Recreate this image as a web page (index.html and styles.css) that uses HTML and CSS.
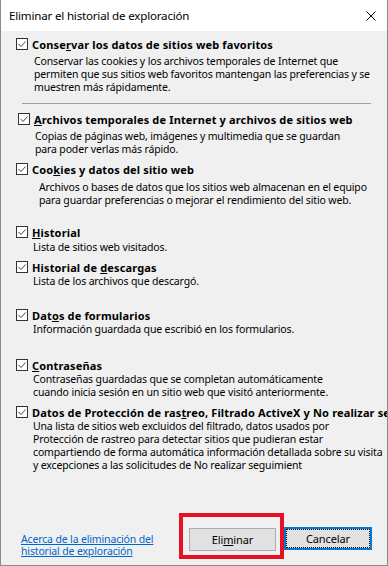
FILE: index.html
```html
<!DOCTYPE html>
<html lang="es">
<head>
<meta charset="utf-8">
<title>Eliminar el historial de exploración</title>
<link rel="stylesheet" href="styles.css">
</head>
<body>
<div class="window">
  <div class="titlebar">
    <span class="title">Eliminar el historial de exploración</span>
    <svg class="close" width="10" height="10" viewBox="0 0 10 10"><path d="M0.5 0.5 L9.5 9.5 M9.5 0.5 L0.5 9.5" stroke="#000" stroke-width="1" fill="none"/></svg>
  </div>
  <div class="content">
    <div class="option o1">
      <div class="label"><svg class="cb" viewBox="0 0 12 12"><rect x="0.5" y="0.5" width="11" height="11" fill="#fff" stroke="#333"/><path d="M2.5 6 L5 8.5 L9.5 3.5" stroke="#444" fill="none"/></svg><span>Conse<u>r</u>var los datos de sitios web favoritos</span></div>
      <p class="desc">Conservar las cookies y los archivos temporales de Internet que<br>permiten que sus sitios web favoritos mantengan las preferencias y se<br>muestren más rápidamente.</p>
    </div>
    <div class="sep"></div>
    <div class="option o2">
      <div class="label"><svg class="cb" viewBox="0 0 12 12"><rect x="0.5" y="0.5" width="11" height="11" fill="#fff" stroke="#333"/><path d="M2.5 6 L5 8.5 L9.5 3.5" stroke="#444" fill="none"/></svg><span><u>A</u>rchivos temporales de Internet y archivos de sitios web</span></div>
      <p class="desc">Copias de páginas web, imágenes y multimedia que se guardan<br>para poder verlas más rápido.</p>
    </div>
    <div class="option o3">
      <div class="label"><svg class="cb" viewBox="0 0 12 12"><rect x="0.5" y="0.5" width="11" height="11" fill="#fff" stroke="#333"/><path d="M2.5 6 L5 8.5 L9.5 3.5" stroke="#444" fill="none"/></svg><span>Coo<u>k</u>ies y datos del sitio web</span></div>
      <p class="desc">Archivos o bases de datos que los sitios web almacenan en el equipo<br>para guardar preferencias o mejorar el rendimiento del sitio web.</p>
    </div>
    <div class="option o4">
      <div class="label"><svg class="cb" viewBox="0 0 12 12"><rect x="0.5" y="0.5" width="11" height="11" fill="#fff" stroke="#333"/><path d="M2.5 6 L5 8.5 L9.5 3.5" stroke="#444" fill="none"/></svg><span><u>H</u>istorial</span></div>
      <p class="desc">Lista de sitios web visitados.</p>
    </div>
    <div class="option o5">
      <div class="label"><svg class="cb" viewBox="0 0 12 12"><rect x="0.5" y="0.5" width="11" height="11" fill="#fff" stroke="#333"/><path d="M2.5 6 L5 8.5 L9.5 3.5" stroke="#444" fill="none"/></svg><span>Historial de <u>d</u>escargas</span></div>
      <p class="desc">Lista de los archivos que descargó.</p>
    </div>
    <div class="option o6">
      <div class="label"><svg class="cb" viewBox="0 0 12 12"><rect x="0.5" y="0.5" width="11" height="11" fill="#fff" stroke="#333"/><path d="M2.5 6 L5 8.5 L9.5 3.5" stroke="#444" fill="none"/></svg><span>Dat<u>o</u>s de formularios</span></div>
      <p class="desc">Información guardada que escribió en los formularios.</p>
    </div>
    <div class="option o7">
      <div class="label"><svg class="cb" viewBox="0 0 12 12"><rect x="0.5" y="0.5" width="11" height="11" fill="#fff" stroke="#333"/><path d="M2.5 6 L5 8.5 L9.5 3.5" stroke="#444" fill="none"/></svg><span><u>C</u>ontraseñas</span></div>
      <p class="desc">Contraseñas guardadas que se completan automáticamente<br>cuando inicia sesión en un sitio web que visitó anteriormente.</p>
    </div>
    <div class="option o8">
      <div class="label"><svg class="cb" viewBox="0 0 12 12"><rect x="0.5" y="0.5" width="11" height="11" fill="#fff" stroke="#333"/><path d="M2.5 6 L5 8.5 L9.5 3.5" stroke="#444" fill="none"/></svg><span>Datos de Protección de ras<u>t</u>reo, Filtrado ActiveX y No realizar seguimiento</span></div>
      <p class="desc">Una lista de sitios web excluidos del filtrado, datos usados por<br>Protección de rastreo para detectar sitios que pudieran estar<br>compartiendo de forma automática información detallada sobre su visita<br>y excepciones a las solicitudes de No realizar seguimient</p>
    </div>
  </div>
  <div class="footer">
    <a class="link" href="#">Acerca de la eliminación del<br>historial de exploración</a>
    <div class="buttons">
      <div class="highlight"><button class="btn" type="button">Eli<u>m</u>inar</button></div>
      <button class="btn btn-default" type="button">Cancelar</button>
    </div>
  </div>
</div>
</body>
</html>
```

FILE: styles.css
```css
html, body {
  margin: 0;
  padding: 0;
}

body {
  width: 388px;
  height: 566px;
  overflow: hidden;
  background: #f0f0f0;
  font-family: "Noto Sans", "Open Sans", "Liberation Sans", sans-serif;
  color: #000;
}

.window {
  box-sizing: border-box;
  width: 388px;
  height: 566px;
  border: 1px solid #8a8a8a;
  border-top: none;
  display: flex;
  flex-direction: column;
  overflow: hidden;
  background: #f0f0f0;
}

.titlebar {
  flex: none;
  height: 31px;
  background: #fff;
  display: flex;
  align-items: center;
  justify-content: space-between;
  padding: 0 11px 0 8px;
}

.title {
  font-size: 11.6px;
  letter-spacing: -0.2px;
}

.close {
  display: block;
}

.content {
  flex: 1;
  min-height: 0;
  padding-left: 15px;
  white-space: nowrap;
  overflow: hidden;
  font-size: 10.5px;
}

.label {
  display: flex;
  align-items: center;
  gap: 4px;
  height: 16px;
  font-size: 11px;
  font-weight: bold;
  letter-spacing: 0.15px;
}

.cb {
  flex: none;
  width: 12px;
  height: 12px;
}

.desc {
  margin: 0 0 0 17px;
  line-height: 13px;
  letter-spacing: -0.15px;
}

.o1 { margin-top: 5px; }
.o1 .desc { margin-top: 3px; margin-left: 18px; }

.sep {
  height: 1px;
  background: #a0a0a0;
  margin: 9px 0 0 6px;
  width: 349px;
}

.o2 { margin-top: 7px; padding-left: 2px; }
.o2 .desc { margin-top: 3px; }

.o3 { margin-top: 5px; }
.o3 .desc { margin-top: 4px; margin-left: 23px; }

.o4 { margin-top: 17px; }
.o4 .desc { margin-top: 1px; }

.o5 { margin-top: 5px; }
.o6 { margin-top: 19px; }
.o7 { margin-top: 21px; }
.o8 { margin-top: 5px; }

.footer {
  flex: none;
  height: 52px;
  display: flex;
  align-items: flex-start;
  padding: 0 15px 0 20px;
}

.link {
  margin-top: 20px;
  font-size: 10.5px;
  line-height: 12px;
  color: #0066cc;
  text-decoration: underline;
  letter-spacing: -0.15px;
}

.buttons {
  margin-left: auto;
  display: flex;
  align-items: flex-start;
}

.highlight {
  box-sizing: border-box;
  width: 105px;
  height: 46px;
  border: 4px solid #e81123;
  padding: 10px 4px 0 6px;
}

.btn {
  box-sizing: border-box;
  width: 87px;
  height: 23px;
  margin: 0;
  padding: 0;
  background: #e1e1e1;
  border: 1px solid #adadad;
  border-radius: 0;
  font-family: inherit;
  font-size: 11px;
  color: #000;
  letter-spacing: -0.1px;
}

.btn-default {
  width: 88px;
  margin-top: 14px;
  border: 2px solid #0078d7;
  outline: 1px dotted #000;
  outline-offset: -3px;
}
```
